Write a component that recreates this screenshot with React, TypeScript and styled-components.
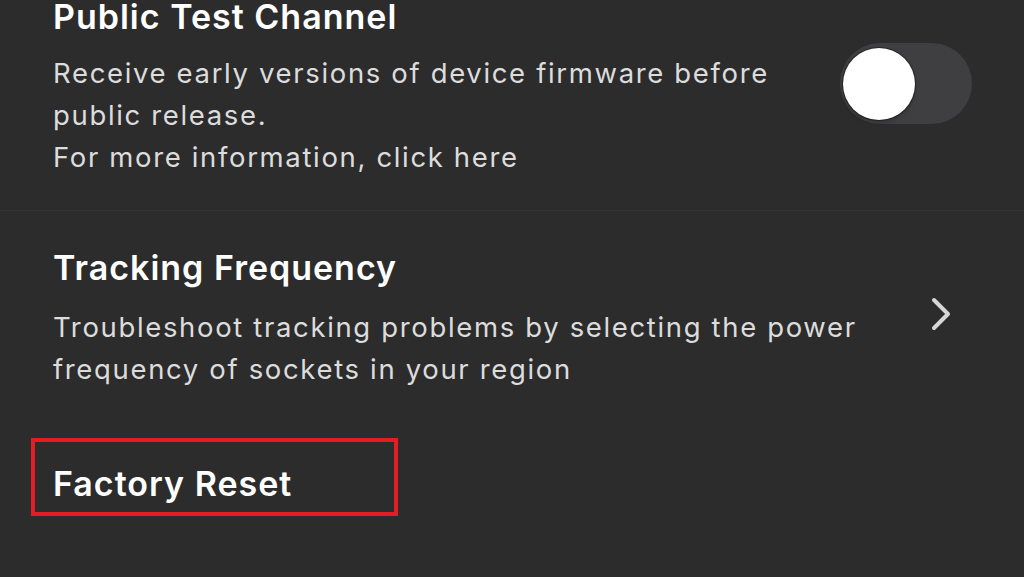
import React from "react";
import styled, { createGlobalStyle } from "styled-components";

const Global = createGlobalStyle`
  html, body {
    margin: 0;
    padding: 0;
    background: #2c2c2c;
  }
  body {
    font-family: Inter, "Noto Sans", "Liberation Sans", sans-serif;
    -webkit-font-smoothing: antialiased;
  }
`;

const Page = styled.div`
  width: 1024px;
  height: 577px;
  overflow: hidden;
  background: #2c2c2c;
  display: flex;
  flex-direction: column;
`;

const Row = styled.div<{ $divider?: boolean; $pt: number; $pb: number }>`
  display: flex;
  align-items: flex-start;
  padding: ${(p) => p.$pt}px 52px ${(p) => p.$pb}px 53px;
  border-bottom: ${(p) => (p.$divider ? "1px solid #343434" : "none")};
`;

const TextCol = styled.div<{ $gap: number }>`
  flex: 1;
  display: flex;
  flex-direction: column;
  gap: ${(p) => p.$gap}px;
`;

const Title = styled.div`
  color: #ffffff;
  font-size: 34px;
  line-height: 34px;
  font-weight: 600;
  letter-spacing: 1px;
  white-space: nowrap;
`;

const Desc = styled.div`
  color: #dcdcdc;
  font-size: 27.5px;
  line-height: 42px;
  font-weight: 400;
  letter-spacing: 1.65px;
  white-space: nowrap;
`;

const Track = styled.div`
  width: 132px;
  height: 81px;
  border-radius: 41px;
  background: #3f3f41;
  margin-top: 43px;
  display: flex;
  align-items: center;
  padding-left: 3px;
  box-sizing: border-box;
  flex-shrink: 0;
`;

const Knob = styled.div`
  width: 72px;
  height: 72px;
  border-radius: 50%;
  background: #ffffff;
  box-shadow: 0 0 0 1px rgba(0, 0, 0, 0.35), 0 2px 4px rgba(0, 0, 0, 0.25);
`;

const Chevron = styled.svg`
  width: 22px;
  height: 36px;
  margin-top: 45px;
  margin-right: 20px;
  flex-shrink: 0;
`;

const ResetRow = styled.div`
  display: flex;
  padding: 48px 0 0 31px;
`;

const Highlight = styled.div`
  width: 367px;
  height: 78px;
  box-sizing: border-box;
  border: 4px solid #e51c23;
  padding: 25px 0 0 18px;
`;

export default function App() {
  return (
    <>
      <Global />
      <Page>
        <Row $divider $pt={0} $pb={32}>
          <TextCol $gap={18}>
            <Title>Public Test Channel</Title>
            <Desc>
              Receive early versions of device firmware before
              <br />
              public release.
              <br />
              For more information, click here
            </Desc>
          </TextCol>
          <Track>
            <Knob />
          </Track>
        </Row>
        <Row $pt={40} $pb={0}>
          <TextCol $gap={21}>
            <Title>Tracking Frequency</Title>
            <Desc>
              Troubleshoot tracking problems by selecting the power
              <br />
              frequency of sockets in your region
            </Desc>
          </TextCol>
          <Chevron viewBox="0 0 22 36" fill="none">
            <path
              d="M4 4 L18 18 L4 32"
              stroke="#d6d6d6"
              strokeWidth="4"
              strokeLinecap="round"
              strokeLinejoin="round"
            />
          </Chevron>
        </Row>
        <ResetRow>
          <Highlight>
            <Title>Factory Reset</Title>
          </Highlight>
        </ResetRow>
      </Page>
    </>
  );
}
